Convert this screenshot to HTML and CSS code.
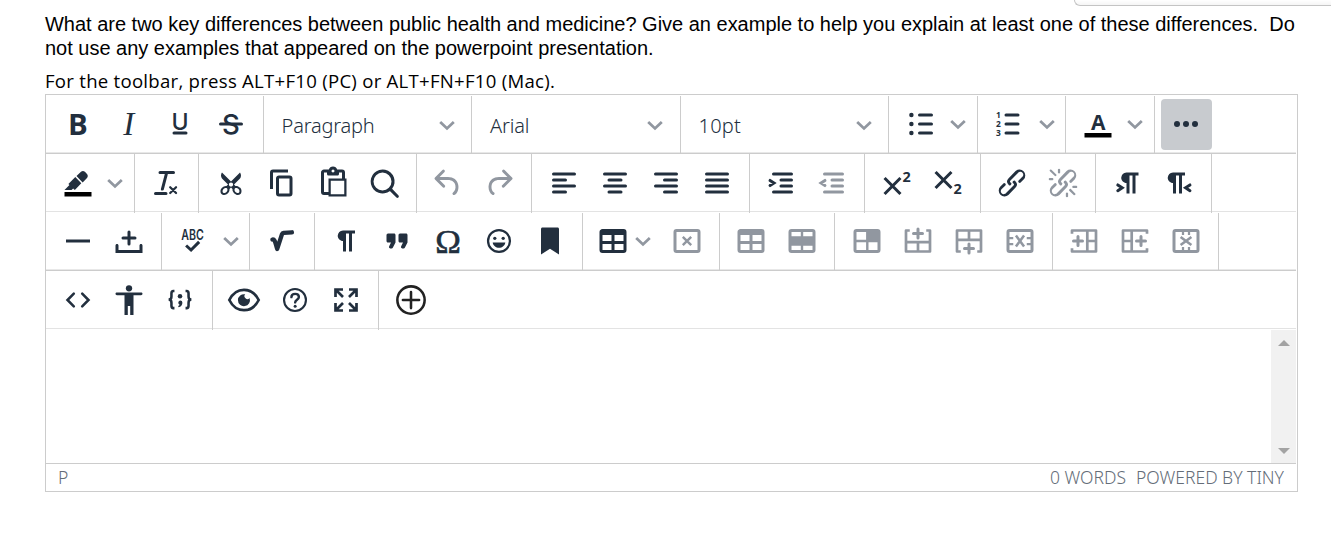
FILE: index.html
```html
<!DOCTYPE html>
<html lang="en">
<head>
  <meta charset="utf-8">
  <title>Question</title>
  <link rel="stylesheet" href="styles.css">
</head>
<body>
  <svg class="defs">
    <symbol id="chevron" viewBox="0 0 24 24"><path class="s" d="M5.2 9l6.8 6.4L18.800 9" stroke-width="2.8"/></symbol>
    <symbol id="pilcrow" viewBox="0 0 24 24"><path d="M10 5h8v2h-2v12h-2V7h-2v12h-2v-7c-.5 0-1 0-1.4-.3A3.4 3.4 0 016.8 10a3.3 3.3 0 010-2.8 3.4 3.4 0 011.8-1.8L10 5z"/></symbol>
    <symbol id="frame" viewBox="0 0 24 24"><rect class="s" x="4" y="5" width="16" height="14" rx="1"/></symbol>
    <symbol id="table" viewBox="0 0 24 24"><path d="M19 4a2 2 0 012 2v12a2 2 0 01-2 2H5a2 2 0 01-2-2V6c0-1.1.9-2 2-2h14zM5 14v4h6v-4H5zm14 0h-6v4h6v-4zm0-6h-6v4h6V8zM5 12h6V8H5v4z"/></symbol>
    <symbol id="chain" viewBox="0 0 24 24"><path d="M6.2 12.3a1 1 0 011.4 1.4l-2.1 2a2 2 0 102.7 2.8l4.8-4.8a1 1 0 000-1.4 1 1 0 111.4-1.3 2.9 2.9 0 010 4L9.6 20a3.9 3.9 0 01-5.5-5.5l2-2zm11.6-.6a1 1 0 01-1.4-1.4l2-2a2 2 0 10-2.6-2.8L11 10.3a1 1 0 000 1.4A1 1 0 119.6 13a2.9 2.9 0 010-4L14.4 4a3.9 3.9 0 015.5 5.5l-2 2z"/></symbol>
    <symbol id="undo" viewBox="0 0 24 24"><path d="M6.4 8H12c3.7 0 6.2 2 6.8 5.1.6 2.7-.4 5.6-2.3 6.8a1 1 0 01-1-1.8c1.1-.6 1.8-2.7 1.4-4.6-.5-2.1-2.1-3.5-4.9-3.5H6.4l3.3 3.3a1 1 0 11-1.4 1.4l-5-5a1 1 0 010-1.4l5-5a1 1 0 011.4 1.4L6.4 8z"/></symbol>
  </svg>

  <div class="panel"></div>

  <div class="question">
    <p class="prompt">What are two key differences between public health and medicine? Give an example to help you explain at least one of these differences.&nbsp; Do not use any examples that appeared on the powerpoint presentation.</p>
    <p class="hint">For the toolbar, press ALT+F10 (PC) or ALT+FN+F10 (Mac).</p>

    <div class="editor">
      <div class="row odd">
        <div class="group">
          <button class="btn"><svg viewBox="0 0 24 24"><text class="bold" x="5.3" y="19">B</text></svg></button>
          <button class="btn"><svg viewBox="0 0 24 24"><text class="italic" x="8.2" y="19.2">I</text></svg></button>
          <button class="btn"><svg viewBox="0 0 24 24"><text class="under" x="12" y="15.8">U</text><path class="s r" d="M8 18h8"/></svg></button>
          <button class="btn"><svg viewBox="0 0 24 24"><text class="strike" x="12" y="18.8">S</text><path class="s r" d="M5 12h14"/></svg></button>
        </div>
        <div class="group">
          <button class="select"><span>Paragraph</span><svg class="chev"><use href="#chevron"/></svg></button>
        </div>
        <div class="group">
          <button class="select"><span>Arial</span><svg class="chev"><use href="#chevron"/></svg></button>
        </div>
        <div class="group">
          <button class="select size"><span>10pt</span><svg class="chev"><use href="#chevron"/></svg></button>
        </div>
        <div class="group">
          <button class="btn"><svg viewBox="0 0 24 24"><circle cx="5.6" cy="6" r="1.5"/><circle cx="5.6" cy="12" r="1.5"/><circle cx="5.6" cy="18" r="1.5"/><path class="s r" d="M11 6h8M11 12h8M11 18h8"/></svg></button>
          <button class="split"><svg class="chev"><use href="#chevron"/></svg></button>
        </div>
        <div class="group">
          <button class="btn"><svg viewBox="0 0 24 24"><g class="num"><text x="3.4" y="7.8">1</text><text x="3.4" y="13.9">2</text><text x="3.4" y="20">3</text></g><path class="s r" d="M10 6h8M10 12h8M10 18h8"/></svg></button>
          <button class="split"><svg class="chev"><use href="#chevron"/></svg></button>
        </div>
        <div class="group">
          <button class="btn"><svg viewBox="0 0 24 24"><text class="forecolor" x="12.2" y="16">A</text><path fill="#000" d="M3 18h18v3H3z"/></svg></button>
          <button class="split"><svg class="chev"><use href="#chevron"/></svg></button>
        </div>
        <div class="group last">
          <button class="btn active"><svg viewBox="0 0 24 24"><circle cx="6" cy="12" r="2"/><circle cx="12" cy="12" r="2"/><circle cx="18" cy="12" r="2"/></svg></button>
        </div>
      </div>

      <div class="row">
        <div class="group">
          <button class="btn"><svg viewBox="0 0 24 24"><path fill="#000" d="M3 18h18v3H3z"/><path d="M7.7 16.7H3l3.3-3.3-.7-.8L10.2 8l4 4.1-4 4.2c-.2.2-.6.2-.8 0l-.6-.7-1.1 1.1zm5-7.5L11 7.4l3-2.9a2 2 0 012.6 0L18 6c.7.7.7 2 0 2.7l-2.9 2.9-2.4-2.4"/></svg></button>
          <button class="split"><svg class="chev"><use href="#chevron"/></svg></button>
        </div>
        <div class="group">
          <button class="btn"><svg viewBox="0 0 24 24"><path d="M13.2 6a1 1 0 010 .2l-2.6 10a1 1 0 01-1 .8h-.2a.8.8 0 01-.8-1l2.6-10H8a1 1 0 110-2h9a1 1 0 010 2h-3.800zM5 18h7a1 1 0 010 2H5a1 1 0 010-2z"/><path class="s r" d="M14.8 14.8l3.900 3.900M18.700 14.8l-3.900 3.900" stroke-width="1.500"/></svg></button>
        </div>
        <div class="group">
          <button class="btn"><svg viewBox="0 0 24 24"><path d="M18 15c.6.7 1 1.4 1 2.3 0 .8-.2 1.5-.7 2l-.8.5-1 .2c-.4 0-.8 0-1.2-.3a3.9 3.9 0 01-2.1-2.2c-.2-.5-.3-1-.2-1.5l-1-1-1 1c0 .5 0 1-.2 1.5-.1.5-.4 1-.9 1.4-.3.4-.7.6-1.2.8l-1.2.3c-.4 0-.7 0-1-.2-.3 0-.6-.3-.8-.5-.5-.5-.8-1.2-.7-2 0-.9.4-1.6 1-2.2A3.7 3.7 0 018.6 14H9l1-1-4-4-.5-1a3.3 3.3 0 010-2c0-.4.3-.7.5-1l6 6 6-6 .5 1a3.3 3.3 0 010 2c0 .4-.3.7-.5 1l-4 4 1 1h.5c.4 0 .8 0 1.2.3.5.2.9.4 1.2.8zm-8.500 2.200l.1-.4v-.3-.4a1 1 0 00-.2-.5 1 1 0 00-.4-.2 1.6 1.6 0 00-.8 0 2.6 2.6 0 00-.8.3 2.500 2.500 0 00-.9 1.100l-.1.4v.7l.2.5.5.2h.7a2.500 2.500 0 00.8-.3 2.8 2.8 0 00.9-1.100zm2.500-2.800c.4 0 .7-.1 1-.4.3-.3.4-.6.4-1s-.1-.7-.4-1c-.3-.3-.6-.4-1-.4s-.7.1-1 .4c-.3.3-.4.6-.4 1s.1.7.4 1c.3.3.6.4 1 .4zm5.400 4l.2-.5v-.4-.3a2.6 2.6 0 00-.3-.8 2.4 2.4 0 00-.7-.7 2.500 2.500 0 00-.8-.3 1.500 1.500 0 00-.8 0 1 1 0 00-.4.2 1 1 0 00-.2.5 1.500 1.500 0 000 .7v.4l.3.4.3.4a2.8 2.8 0 00.8.5l.4.1h.7l.5-.2z"/></svg></button>
          <button class="btn"><svg viewBox="0 0 24 24"><path d="M16 3H6a2 2 0 00-2 2v11h2V5h10V3zm1 4a2 2 0 012 2v10a2 2 0 01-2 2h-7a2 2 0 01-2-2V9c0-1.2.9-2 2-2h7zm0 12V9h-7v10h7z"/></svg></button>
          <button class="btn"><svg viewBox="0 0 24 24"><path fill-rule="evenodd" d="M18 9V5h-2v1c0 .6-.4 1-1 1H9a1 1 0 01-1-1V5H6v13h3V9h9zM9 20H6a2 2 0 01-2-2V5c0-1.1.9-2 2-2h3.2A3 3 0 0112 1a3 3 0 012.8 2H18a2 2 0 012 2v4h1v12H9v-1zm1.5-9.5v9h9v-9h-9zM12 3a1 1 0 00-1 1c0 .5.4 1 1 1s1-.5 1-1-.4-1-1-1z"/></svg></button>
          <button class="btn"><svg viewBox="0 0 24 24"><path d="M16 17.3a8 8 0 111.4-1.4l4.3 4.4a1 1 0 01-1.4 1.4l-4.4-4.3zm-5-.3a6 6 0 100-12 6 6 0 000 12z"/></svg></button>
        </div>
        <div class="group">
          <button class="btn off"><svg><use href="#undo"/></svg></button>
          <button class="btn off"><svg class="flip"><use href="#undo"/></svg></button>
        </div>
        <div class="group">
          <button class="btn"><svg viewBox="0 0 24 24"><path class="s r" d="M5 6h14M5 10h8M5 14h14M5 18h8"/></svg></button>
          <button class="btn"><svg viewBox="0 0 24 24"><path class="s r" d="M5 6h14M8 10h8M5 14h14M8 18h8"/></svg></button>
          <button class="btn"><svg viewBox="0 0 24 24"><path class="s r" d="M5 6h14M11 10h8M5 14h14M11 18h8"/></svg></button>
          <button class="btn"><svg viewBox="0 0 24 24"><path class="s r" d="M5 6h14M5 10h14M5 14h14M5 18h14"/></svg></button>
        </div>
        <div class="group">
          <button class="btn"><svg viewBox="0 0 24 24"><path class="s r" d="M7 6h12M12 10h7M12 14h7M7 18h12M4.700 10.300L7.300 12l-2.600 1.700"/></svg></button>
          <button class="btn off"><svg viewBox="0 0 24 24"><path class="s r" d="M7 6h12M12 10h7M12 14h7M7 18h12M7.300 10.300L4.700 12l2.600 1.700"/></svg></button>
        </div>
        <div class="group">
          <button class="btn"><svg viewBox="0 0 24 24"><path class="s" d="M3.7 8.7l10.6 10.6M14.3 8.7L3.7 19.3"/><text class="script" x="15.6" y="11">2</text></svg></button>
          <button class="btn"><svg viewBox="0 0 24 24"><path class="s" d="M3.7 4.7l10.6 10.6M14.3 4.7L3.7 15.3"/><text class="script" x="15.6" y="19">2</text></svg></button>
        </div>
        <div class="group">
          <button class="btn"><svg><use href="#chain"/></svg></button>
          <button class="btn off"><svg viewBox="0 0 24 24"><use href="#chain"/><path d="M7.6 6.3a.8.8 0 01-1 1.1L3.3 4.2a.7.7 0 111-1l3.2 3.1zM5.1 8.6a.8.8 0 010 1.5H3a.8.8 0 010-1.5H5zm5-3.5a.8.8 0 01-1.500 0V3a.8.8 0 011.500 0V5zm6 11.800a.8.8 0 011-1l3.200 3.200a.8.8 0 01-1 1L16 17zm-2.200 2a.8.8 0 011.500 0V21a.8.8 0 01-1.500 0V19zm5-3.500a.7.7 0 110-1.500H21a.8.8 0 010 1.500H19z"/></svg></button>
        </div>
        <div class="group">
          <button class="btn"><svg viewBox="0 0 24 24"><use href="#pilcrow" x="1"/><path class="s r" d="M5.2 13.300l2.900 1.900-2.900 1.900"/></svg></button>
          <button class="btn"><svg viewBox="0 0 24 24"><use href="#pilcrow" x="-2"/><path class="s r" d="M19.300 13.300l-2.900 1.900 2.900 1.900"/></svg></button>
        </div>
      </div>

      <div class="row odd">
        <div class="group">
          <button class="btn"><svg viewBox="0 0 24 24"><path d="M4 11h16v2H4z"/></svg></button>
          <button class="btn"><svg viewBox="0 0 24 24"><path class="s r" d="M12 6v8M8 10h8"/><path d="M21 15v5H3v-5c0-.6.4-1 1-1s1 .4 1 1v3h14v-3c0-.6.4-1 1-1s1 .4 1 1z"/></svg></button>
        </div>
        <div class="group">
          <button class="btn"><svg viewBox="0 0 24 24"><text class="abc" x="4.200" y="11" textLength="15" lengthAdjust="spacingAndGlyphs">ABC</text><path class="s" d="M7.400 15l3.300 3 5.400-5.400" stroke-width="2"/></svg></button>
          <button class="split"><svg class="chev"><use href="#chevron"/></svg></button>
        </div>
        <div class="group">
          <button class="btn"><svg viewBox="0 0 24 24"><path class="s r" d="M5.600 11c1.700-.4 1.900 2 3.200 6.300L12 7.400c.3-.6.7-.7 1.200-.8l5.400-.4" stroke-width="2.900" stroke-linejoin="round"/></svg></button>
        </div>
        <div class="group">
          <button class="btn"><svg><use href="#pilcrow"/></svg></button>
          <button class="btn"><svg viewBox="0 0 24 24"><path d="M7.500 17h.9c.4 0 .7-.2.9-.6L11 13V8c0-.6-.4-1-1-1H6a1 1 0 00-1 1v4c0 .6.4 1 1 1h2l-1.300 2.700a1 1 0 00.8 1.300zm8 0h.9c.4 0 .7-.2.9-.6L19 13V8c0-.6-.4-1-1-1h-4a1 1 0 00-1 1v4c0 .6.4 1 1 1h2l-1.300 2.700a1 1 0 00.8 1.300z"/></svg></button>
          <button class="btn"><svg viewBox="0 0 24 24"><text class="omega" x="12" y="20">Ω</text></svg></button>
          <button class="btn"><svg viewBox="0 0 24 24"><circle class="s" cx="12" cy="12" r="7.300" stroke-width="1.500"/><circle cx="9.200" cy="10.200" r="1.100"/><circle cx="14.800" cy="10.200" r="1.100"/><path d="M7.800 13h8.400c-.3 2.200-2.100 3.500-4.200 3.500S8.100 15.200 7.800 13z"/></svg></button>
          <button class="btn"><svg viewBox="0 0 24 24"><path d="M6 4c0-.6.4-1 1-1h10c.6 0 1 .4 1 1v17l-6-3.800L6 21z"/></svg></button>
        </div>
        <div class="group">
          <button class="menu"><svg><use href="#table"/></svg><svg class="chev"><use href="#chevron"/></svg></button>
          <button class="btn off"><svg viewBox="0 0 24 24"><use href="#frame"/><path class="s" d="M9.200 9.200l5.600 5.600M14.800 9.200l-5.600 5.600" stroke-width="1.600"/></svg></button>
        </div>
        <div class="group">
          <button class="btn off"><svg><use href="#table"/></svg></button>
          <button class="btn off"><svg viewBox="0 0 24 24"><use href="#frame"/><path d="M4 8.800h16v6.400H4zM11.200 5h1.600v14h-1.600z"/></svg></button>
        </div>
        <div class="group">
          <button class="btn off"><svg viewBox="0 0 24 24"><use href="#frame"/><path d="M11.400 5H20v7.800h-8.600zM4 11.200h9v1.600H4zM11.400 12H13v7h-1.600z"/></svg></button>
          <button class="btn off"><svg viewBox="0 0 24 24"><path class="s" d="M6.500 5H4v14h16V5h-2.500M4 12.800h16M12 12.800V19" stroke-width="1.800" stroke-linejoin="round"/><path class="s r" d="M12 4v6M9 7h6"/></svg></button>
          <button class="btn off"><svg viewBox="0 0 24 24"><path class="s" d="M6.500 19H4V5h16v14h-2.500M4 11.200h16M12 11.200V5" stroke-width="1.800" stroke-linejoin="round"/><path class="s r" d="M12 14v6M9 17h6"/></svg></button>
          <button class="btn off"><svg viewBox="0 0 24 24"><use href="#frame"/><path class="s" d="M4 10h3.500M4 14h3.500M20 10h-3.500M20 14h-3.500" stroke-width="1.500"/><path class="s" d="M9.300 8.400l5.400 7.200M14.700 8.400l-5.400 7.200" stroke-width="1.700"/></svg></button>
        </div>
        <div class="group">
          <button class="btn off"><svg viewBox="0 0 24 24"><path class="s" d="M4 7.200V5h16v14H4v-2.200M14.200 5v14M14.200 12H20" stroke-width="1.800" stroke-linejoin="round"/><path class="s r" d="M8 9v6M5 12h6"/></svg></button>
          <button class="btn off"><svg viewBox="0 0 24 24"><path class="s" d="M20 7.200V5H4v14h16v-2.200M9.800 5v14M9.800 12H4" stroke-width="1.800" stroke-linejoin="round"/><path class="s r" d="M16 9v6M13 12h6"/></svg></button>
          <button class="btn off"><svg viewBox="0 0 24 24"><use href="#frame"/><path class="s" d="M10 5v3M14 5v3M10 19v-3M14 19v-3" stroke-width="1.500"/><path class="s" d="M8.400 9.300l7.200 5.400M15.600 9.300l-7.200 5.400" stroke-width="1.700"/></svg></button>
        </div>
      </div>

      <div class="row">
        <div class="group">
          <button class="btn"><svg viewBox="0 0 24 24"><path class="s r" d="M9.200 7.800L5 12l4.200 4.200M14.800 7.800L19 12l-4.200 4.200" stroke-width="1.700"/></svg></button>
          <button class="btn"><svg viewBox="0 0 24 24"><circle cx="12" cy="4.200" r="2.100"/><path d="M4 7h16c.6 0 1 .3 1 .9s-.4.9-1 .9h-5V22h-2.200v-6h-1.600v6H9V8.800H4c-.6 0-1-.3-1-.9S3.400 7 4 7z"/></svg></button>
          <button class="btn"><svg viewBox="0 0 24 24"><path class="s" d="M8.300 6h-.7C6.500 6 6.300 6.700 6.300 7.600v2c0 1.200-.5 2.100-1.900 2.100 1.400 0 1.900.9 1.900 2.100v2c0 .9.2 1.600 1.300 1.600h.7M15.700 6h.7c1.100 0 1.300.7 1.300 1.600v2c0 1.200.5 2.100 1.900 2.100-1.400 0-1.900.9-1.900 2.100v2c0 .9-.2 1.600-1.300 1.600h-.7" stroke-width="1.700"/><circle cx="12" cy="9.500" r="1.500"/><path d="M12 12.400a1.500 1.500 0 011.600 1.500c0 1.500-1 2.700-2.500 3l-.4-.9c.6-.2.9-.5 1-.8a1.500 1.500 0 01.3-2.800z"/></svg></button>
        </div>
        <div class="group">
          <button class="btn"><svg viewBox="0 0 24 24"><path class="s" d="M2.200 12C4.200 8 7.600 5.200 12 5.200S19.800 8 21.800 12c-2 4-5.400 6.800-9.800 6.800S4.200 16 2.200 12z" stroke-width="1.800"/><path d="M12.800 8.200a1.800 1.800 0 102.900 2.500A4 4 0 1112.800 8.200z"/></svg></button>
          <button class="btn"><svg viewBox="0 0 24 24"><circle class="s" cx="12" cy="12" r="7.300" stroke-width="1.400"/><path class="s r" d="M9.600 10.100c0-1.300 1-2.200 2.500-2.200s2.500.9 2.500 2.100c0 1.800-2.500 1.800-2.500 3.600" stroke-width="1.600"/><circle cx="12.100" cy="16.200" r="1"/></svg></button>
          <button class="btn"><svg viewBox="0 0 24 24"><path class="s" d="M5 10V5h5M5 5l5 5M14 5h5v5M19 5l-5 5M5 14v5h5M5 19l5-5M19 14v5h-5M19 19l-5-5" stroke-width="1.800"/></svg></button>
        </div>
        <div class="group last">
          <button class="btn add"><svg viewBox="0 0 24 24"><circle class="s" cx="12" cy="12" r="9.100" stroke-width="1.700"/><path class="s r" d="M12 6.600v10.800M6.600 12h10.800" stroke-width="1.700"/></svg></button>
        </div>
      </div>

      <div class="content">
        <div class="scrollbar"><span class="up"></span><span class="down"></span></div>
      </div>
      <div class="statusbar">
        <span>P</span>
        <span class="words">0 WORDS</span>
        <span class="brand">POWERED BY TINY</span>
      </div>
    </div>
  </div>
</body>
</html>
```
FILE: styles.css
```css
* {
  box-sizing: border-box;
}
body {
  margin: 0;
  height: 539px;
  overflow: hidden;
  background: #fff;
  color: #000;
}
.defs {
  display: none;
}
.panel {
  height: 6px;
  margin-left: 1074px;
  border: 1px solid #c4c4c4;
  border-width: 0 0 1px 1px;
  border-radius: 0 0 0 6px;
  background: linear-gradient(#fff, #f5f5f5);
}
.question {
  width: 1253px;
  margin-left: 45px;
  padding-top: 6px;
}
.prompt {
  margin: 0;
  font: 20px/24px "Liberation Sans", Arial, sans-serif;
  letter-spacing: -0.01px;
}
.hint {
  margin: 0;
  padding-top: 8px;
  height: 34px;
  font: 18.6px/26px "Open Sans", sans-serif;
  letter-spacing: 0.26px;
}
.editor {
  width: 1253px;
  height: 398px;
  border: 1px solid #ccc;
  padding-right: 1px;
  color: #222f3e;
}
.row {
  display: flex;
  height: 58px;
  padding-left: 0.1px;
  border-bottom: 1px solid #e3e3e3;
}
.row.odd {
  height: 59px;
  border-bottom: 1px solid #ccc;
  box-shadow: inset 0 -1px #e8e8e8;
}
.group {
  display: flex;
  height: 59px;
  padding: 4px 6.5px 0 6px;
  border-right: 1px solid #ccc;
}
.odd .group {
  height: 57px;
  margin-top: 1px;
  padding-top: 3px;
}
.group.last {
  border-right: 0;
}
button {
  display: flex;
  align-items: center;
  height: 51px;
  padding: 0 0 1px;
  border: 0;
  background: none;
  color: #222f3e;
}
.btn {
  width: 51px;
  justify-content: center;
  border-radius: 4px;
}
.btn.active {
  background: #c8cbcf;
}
.btn.off {
  color: #9197a0;
}
.btn.add {
  color: #222;
}
.split {
  width: 24px;
}
.menu {
  width: 72px;
  padding-left: 6px;
}
.select {
  width: 195px;
  padding: 0 6px 0 12px;
  justify-content: space-between;
  font: 300 20px/30px "Noto Sans", sans-serif;
  letter-spacing: -0.2px;
}
.select.size {
  letter-spacing: 0.2px;
}
.select span {
  padding-top: 2px;
}
svg {
  width: 36px;
  height: 36px;
  flex: none;
  overflow: visible;
  fill: currentColor;
  stroke-width: 2;
}
.chev {
  width: 24px;
  height: 24px;
  color: #9197a0;
}
.flip {
  transform: scaleX(-1);
}
.s {
  fill: none;
  stroke: currentColor;
}
.r {
  stroke-linecap: round;
}
text {
  letter-spacing: 0;
}
.bold {
  font: bold 19.6px/1 "Open Sans", sans-serif;
}
.italic {
  font: italic 22px/1 "Liberation Serif", serif;
}
.under {
  font: 500 15.4px/1 Inter, sans-serif;
  text-anchor: middle;
}
.strike {
  font: 500 18.4px/1 Inter, sans-serif;
  text-anchor: middle;
}
.forecolor {
  font: bold 14px/1 "Open Sans", sans-serif;
  text-anchor: middle;
}
.num {
  font: bold 5.6px/1 "Open Sans", sans-serif;
}
.script {
  font: bold 9.6px/1 "Open Sans", sans-serif;
}
.abc {
  font: 600 9.4px/1 Inter, sans-serif;
}
.omega {
  font: 23px/1 "Liberation Serif", serif;
  stroke: currentColor;
  stroke-width: 0.4;
  text-anchor: middle;
}
.content {
  display: flex;
  justify-content: flex-end;
  height: 134px;
  padding-top: 1px;
}
.scrollbar {
  display: flex;
  flex-direction: column;
  align-items: center;
  justify-content: space-between;
  width: 25px;
  padding: 10px 0 9px;
  background: #f1f1f1;
}
.up, .down {
  border: 6px solid transparent;
}
.up {
  border-top: 0;
  border-bottom-color: #a3a3a3;
}
.down {
  border-bottom: 0;
  border-top-color: #a3a3a3;
}
.statusbar {
  display: flex;
  height: 28px;
  padding: 0 12px;
  border-top: 1px solid #ccc;
  color: #646d78;
  font: 300 17.5px/27px "Noto Sans", sans-serif;
}
.words {
  margin-left: auto;
}
.brand {
  margin-left: 10px;
}
```
